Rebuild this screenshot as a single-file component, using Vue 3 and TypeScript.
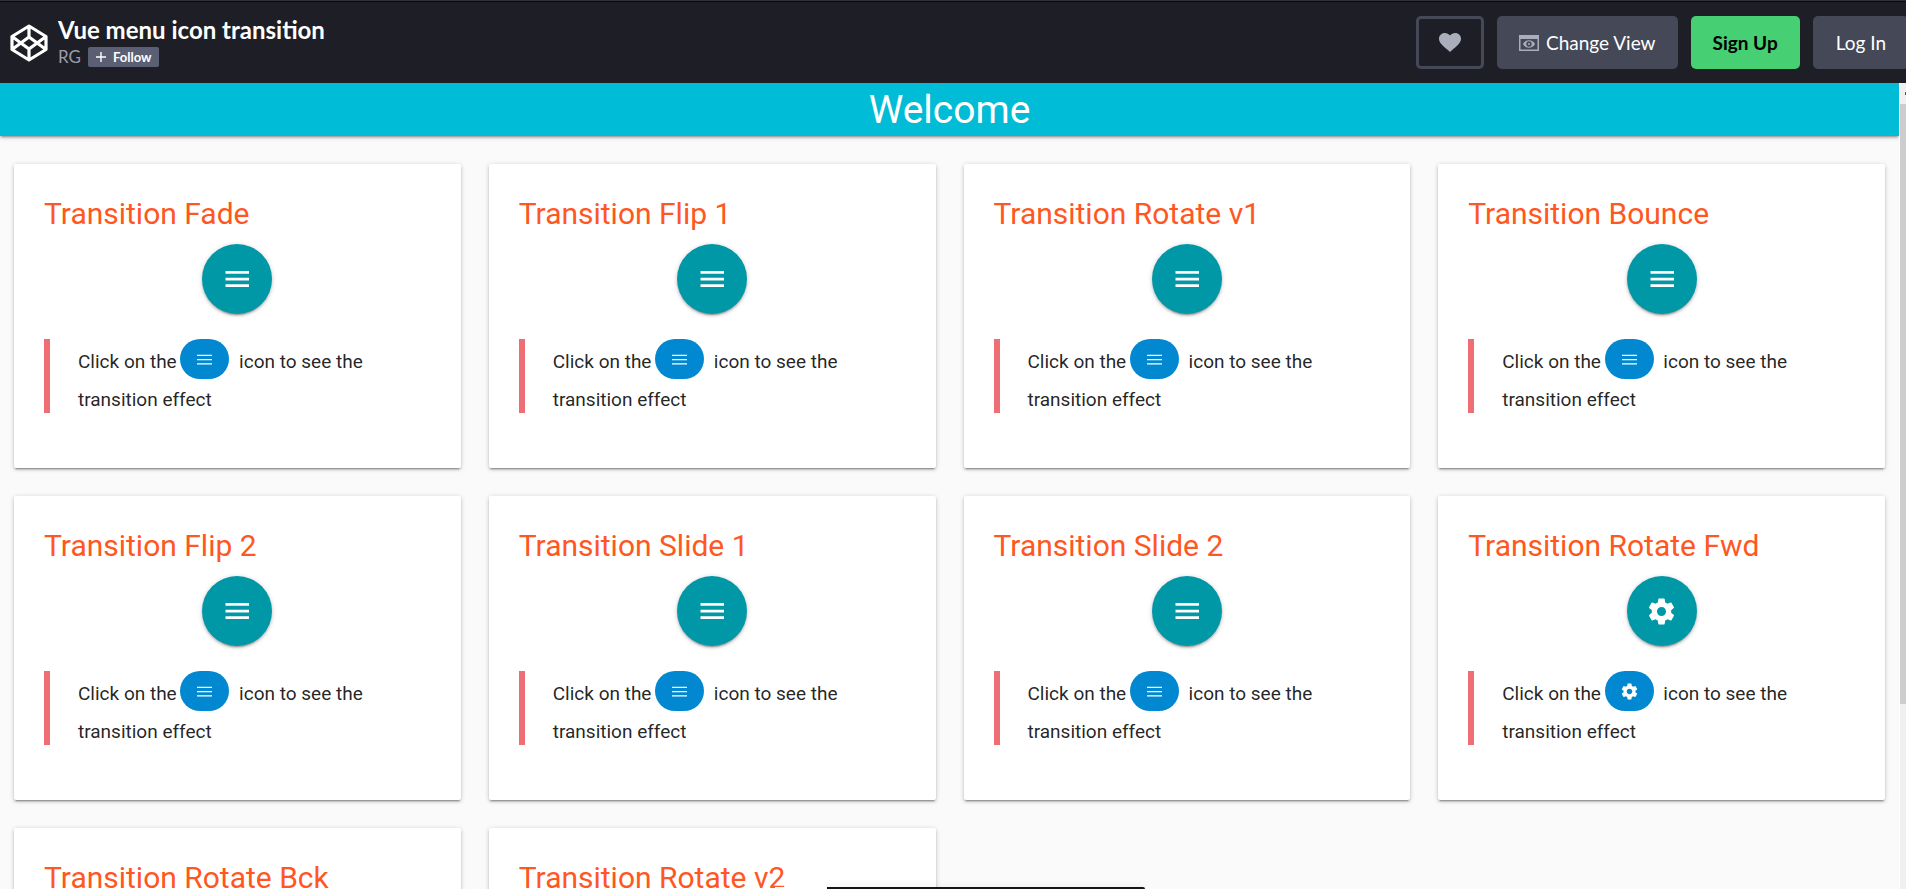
<script setup lang="ts">
type IconName = 'menu' | 'gear'

interface Demo {
  title: string
  icon: IconName
}

const demos: Demo[] = [
  { title: 'Transition Fade', icon: 'menu' },
  { title: 'Transition Flip 1', icon: 'menu' },
  { title: 'Transition Rotate v1', icon: 'menu' },
  { title: 'Transition Bounce', icon: 'menu' },
  { title: 'Transition Flip 2', icon: 'menu' },
  { title: 'Transition Slide 1', icon: 'menu' },
  { title: 'Transition Slide 2', icon: 'menu' },
  { title: 'Transition Rotate Fwd', icon: 'gear' },
  { title: 'Transition Rotate Bck', icon: 'gear' },
  { title: 'Transition Rotate v2', icon: 'menu' },
]

const gearPath =
  'M19.43 12.98c.04-.32.07-.64.07-.98s-.03-.66-.07-.98l2.11-1.65c.19-.15.24-.42.12-.64l-2-3.46c-.12-.22-.39-.3-.61-.22l-2.49 1c-.52-.4-1.08-.73-1.69-.98l-.38-2.65C14.46 2.18 14.25 2 14 2h-4c-.25 0-.46.18-.49.42l-.38 2.65c-.61.25-1.17.59-1.69.98l-2.49-1c-.23-.09-.49 0-.61.22l-2 3.46c-.13.22-.07.49.12.64l2.11 1.65c-.04.32-.07.65-.07.98s.03.66.07.98l-2.11 1.65c-.19.15-.24.42-.12.64l2 3.46c.12.22.39.3.61.22l2.49-1c.52.4 1.08.73 1.69.98l.38 2.65c.03.24.24.42.49.42h4c.25 0 .46-.18.49-.42l.38-2.65c.61-.25 1.17-.59 1.69-.98l2.49 1c.23.09.49 0 .61-.22l2-3.46c.12-.22.07-.49-.12-.64l-2.11-1.65zM12 15.5c-1.93 0-3.5-1.57-3.5-3.5s1.57-3.5 3.5-3.5 3.5 1.57 3.5 3.5-1.57 3.5-3.5 3.5z'
</script>

<template>
  <div class="page">
    <header class="topbar">
      <a class="logo" href="#" aria-label="Home">
        <svg viewBox="0 0 38 38" fill="none" stroke="#fff" stroke-width="3.2" stroke-linejoin="round">
          <path d="M19 2 36 12.5V25.500L19 36 2 25.500V12.500ZM19 2V12.500M19 36V25.500M2 12.500 19 25 36 12.500M2 25.500 19 13 36 25.500" />
        </svg>
      </a>
      <div class="heading">
        <h1>Vue menu icon transition</h1>
        <div class="byline">
          <a class="author" href="#">RG</a>
          <button class="follow" type="button">
            <svg viewBox="0 0 10 10" stroke="#fff" stroke-width="1.4"><path d="M5 0V10M0 5H10" /></svg>
            Follow
          </button>
        </div>
      </div>
      <nav class="actions">
        <button class="btn heart" type="button" aria-label="Love">
          <svg viewBox="0 0 22 19" fill="#aaaebc">
            <path d="M11 19 9.400 17.600C3.700 12.600 0 9.700 0 5.800 0 2.500 2.500 0 5.800 0 7.800 0 9.800 1 11 2.600 12.200 1 14.200 0 16.200 0 19.500 0 22 2.500 22 5.800 22 9.700 18.300 12.600 12.600 17.600Z" />
          </svg>
        </button>
        <button class="btn view" type="button">
          <svg viewBox="0 0 20 16" fill="#aaaebc">
            <path fill-rule="evenodd" d="M0 0H20V16H0ZM1.500 4V14.500H18.500V4Z" />
            <path fill-rule="evenodd" d="M4 9C6.500 4 13.500 4 16 9 13.500 14 6.500 14 4 9ZM10 6.300A2.700 2.700 0 1 0 10 11.700 2.700 2.700 0 1 0 10 6.300Z" />
            <circle cx="10" cy="9" r="1" />
          </svg>
          Change View
        </button>
        <button class="btn signup" type="button">Sign Up</button>
        <button class="btn login" type="button">Log In</button>
      </nav>
    </header>

    <div class="preview">
      <main class="content">
        <h2 class="banner">Welcome</h2>
        <div class="grid">
          <section v-for="demo in demos" :key="demo.title" class="card">
            <h3>{{ demo.title }}</h3>
            <button class="round" type="button" :aria-label="demo.title">
              <svg v-if="demo.icon === 'menu'" class="menu-big" viewBox="0 0 24 16" fill="#fff">
                <path d="M.5 0H24V2.700H.5ZM.5 6.700H24V9.400H.5ZM.5 13.300H24V16H.5Z" />
              </svg>
              <svg v-else class="gear-big" viewBox="0 0 24 24" fill="#fff"><path :d="gearPath" /></svg>
            </button>
            <blockquote>
              Click on the
              <span class="pill">
                <svg v-if="demo.icon === 'menu'" class="menu-small" viewBox="0 0 15 11" fill="#fff">
                  <path d="M0 .8H15V2H0ZM0 5H15V6.200H0ZM0 9.300H15V10.500H0Z" />
                </svg>
                <svg v-else class="gear-small" viewBox="0 0 24 24" fill="#fff"><path :d="gearPath" /></svg>
              </span>
              icon to see the transition effect
            </blockquote>
          </section>
        </div>
      </main>
      <div class="scrollbar" aria-hidden="true">
        <div class="scroll-up"></div>
        <div class="thumb"></div>
      </div>
    </div>
    <div class="dock" aria-hidden="true">
      <div class="dock-light"></div>
      <div class="dock-dark"></div>
    </div>
  </div>
</template>

<style>
body {
  margin: 0;
  background: #fafafa;
}
</style>

<style scoped>
.page {
  position: relative;
  display: flex;
  flex-direction: column;
  height: 100vh;
  overflow: hidden;
  font-family: Roboto, "Liberation Sans", sans-serif;
}

svg {
  display: block;
}

button {
  font-family: inherit;
  cursor: pointer;
}

.topbar {
  display: flex;
  flex: none;
  align-items: center;
  box-sizing: border-box;
  height: 83px;
  padding: 2px 0 0 10px;
  overflow: hidden;
  background: #1e1f26;
  box-shadow: inset 0 1px #2f3136, inset 0 2px #0a0a0c;
  font-family: Lato, sans-serif;
}

.logo svg {
  width: 38px;
  height: 38px;
}

.heading {
  padding-bottom: 3px;
  margin-left: 10px;
}

.heading h1 {
  margin: 0 0 3px;
  color: #fff;
  font-size: 24px;
  font-weight: 700;
  line-height: 28px;
}

.byline {
  display: flex;
  align-items: center;
  gap: 7px;
}

.author {
  color: #9b9dad;
  font-size: 17px;
  line-height: 20px;
  text-decoration: none;
}

.follow {
  display: flex;
  align-items: center;
  gap: 7px;
  height: 20px;
  padding: 0 8px;
  border: 0;
  border-radius: 2px;
  background: #5a5f73;
  color: #fff;
  font-size: 13px;
  font-weight: 700;
}

.follow svg {
  width: 10px;
  height: 10px;
}

.actions {
  display: flex;
  gap: 13px;
  margin-left: auto;
  margin-right: -3px;
}

.btn {
  display: flex;
  align-items: center;
  justify-content: center;
  box-sizing: border-box;
  height: 53px;
  padding: 0 22px;
  border: 0;
  border-radius: 5px;
  background: #444857;
  color: #fff;
  font-size: 19px;
  white-space: nowrap;
}

.heart {
  width: 68px;
  padding: 0;
  border: 3px solid #444857;
  background: transparent;
}

.heart svg {
  width: 22px;
  height: 19px;
}

.view {
  gap: 7px;
}

.view svg {
  width: 20px;
  height: 16px;
}

.signup {
  background: #47cf73;
  color: #000;
  font-weight: 700;
}

.login {
  padding: 0 23px;
}

.preview {
  display: flex;
  flex: 1;
  min-height: 0;
  overflow: hidden;
}

.content {
  flex: 1;
  min-width: 0;
}

.banner {
  margin: 0;
  padding-top: 2px;
  background: #00bcd7;
  box-shadow: 0 2px 2px rgba(0, 0, 0, 0.14), 0 3px 1px -2px rgba(0, 0, 0, 0.12), 0 1px 5px rgba(0, 0, 0, 0.2);
  color: #fff;
  font-size: 39px;
  font-weight: 400;
  line-height: 51px;
  text-align: center;
}

.grid {
  display: grid;
  grid-template-columns: repeat(4, 1fr);
  gap: 28px;
  padding: 28px 14px;
}

.card {
  padding: 30px 30px 55px;
  border-radius: 2px;
  background: #fff;
  box-shadow: 0 2px 2px rgba(0, 0, 0, 0.14), 0 3px 1px -2px rgba(0, 0, 0, 0.2), 0 1px 5px rgba(0, 0, 0, 0.2);
  color: rgba(0, 0, 0, 0.87);
}

.card h3 {
  margin: 0 0 10px;
  color: #ff5722;
  font-size: 30px;
  font-weight: 400;
  line-height: 40px;
}

.round {
  display: flex;
  align-items: center;
  justify-content: center;
  width: 70px;
  height: 70px;
  margin: 0 auto 25px;
  padding: 0;
  border: 0;
  border-radius: 50%;
  background: #0097a7;
  box-shadow: 0 2px 2px rgba(0, 0, 0, 0.14), 0 3px 1px -2px rgba(0, 0, 0, 0.2), 0 1px 5px rgba(0, 0, 0, 0.2);
}

.menu-big {
  width: 24px;
  height: 16px;
}

.gear-big {
  width: 31px;
  height: 31px;
}

blockquote {
  margin: 0;
  padding-left: 28px;
  border-left: 6px solid #ee6e73;
  font-size: 19px;
  line-height: 26px;
}

/* The bottom margin spaces the pill's line from the next one. */
.pill {
  display: inline-flex;
  align-items: center;
  justify-content: center;
  width: 49px;
  height: 40px;
  margin: 0 5px 8px -1px;
  border-radius: 20px;
  background: #0288d1;
  vertical-align: middle;
}

.menu-small {
  width: 15px;
  height: 11px;
}

.gear-small {
  width: 19px;
  height: 19px;
}

.scrollbar {
  width: 6px;
  border-left: 1px solid #fff;
  background: #f0f0f0;
}

.scroll-up {
  display: flex;
  align-items: center;
  justify-content: flex-end;
  height: 21px;
}

.scroll-up::after {
  width: 1px;
  height: 3px;
  background: #505050;
  content: "";
}

.thumb {
  height: 74.5%;
  background: #cdcdcd;
}

.dock {
  position: absolute;
  right: 0;
  bottom: 0;
  left: 0;
  display: flex;
  justify-content: center;
  height: 2px;
  padding-left: 14px;
}

.dock-light {
  width: 52px;
  background: #fff;
}

.dock-dark {
  width: 318px;
  border-radius: 0 3px 0 0;
  background: #131417;
  box-shadow: 0 0 8px rgba(0, 0, 0, 0.15);
}
</style>
